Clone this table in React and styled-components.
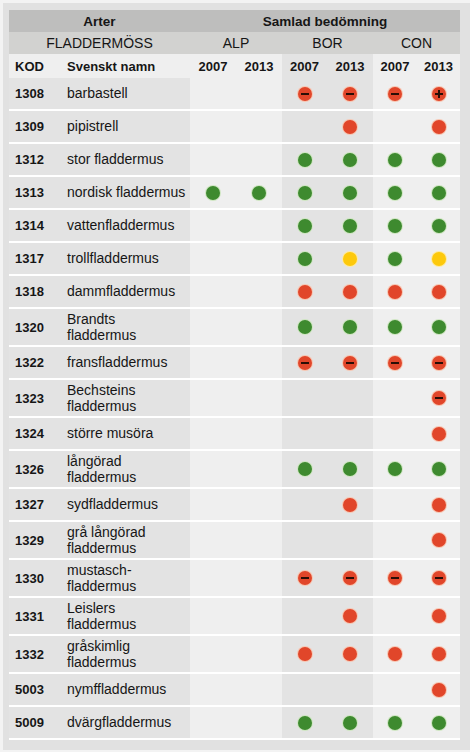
import React from "react";
import styled, { createGlobalStyle, css } from "styled-components";

const Global = createGlobalStyle`
  *, *::before, *::after { box-sizing: border-box; }
  html, body { margin: 0; padding: 0; background: #f3f3f3; }
  body { font-family: "Liberation Sans", Arial, sans-serif; color: #161616; }
`;

const COLS = "53px 128px 46px 46px 45px 46px 44px 43px";

const Frame = styled.div`
  margin: 3px 0 0 3px;
  padding: 7px 0 10px 6px;
  background: #e1e1e1;
  width: 467px;
`;

const Table = styled.div`
  width: 451px;
  display: flex;
  flex-direction: column;
`;

const Row = styled.div`
  display: grid;
  grid-template-columns: ${COLS};
  height: ${(p) => p.$h}px;
  background: ${(p) => p.$bg || "transparent"};
  ${(p) => p.$sep && css`border-bottom: 2px solid #ffffff;`}
`;

const Title = styled.div`
  grid-column: ${(p) => p.$span};
  display: flex;
  align-items: center;
  justify-content: center;
  font-size: ${(p) => (p.$bold ? "13.5px" : "14px")};
  font-weight: ${(p) => (p.$bold ? 700 : 400)};
`;

const HeadCell = styled.div`
  display: flex;
  align-items: center;
  justify-content: ${(p) => (p.$left ? "flex-start" : "center")};
  padding-left: ${(p) => p.$pl || 0}px;
  font-size: 13px;
  font-weight: 700;
  background: ${(p) => (p.$dark ? "#e3e3e3" : "#efefef")};
`;

const Kod = styled.div`
  display: flex;
  align-items: center;
  padding-left: 6px;
  font-size: 13px;
  font-weight: 700;
  background: #e3e3e3;
`;

const Name = styled.div`
  display: flex;
  flex-direction: column;
  justify-content: center;
  padding-left: 5px;
  font-size: 14px;
  line-height: 16.5px;
  background: #e3e3e3;
`;

const Cell = styled.div`
  display: flex;
  align-items: center;
  justify-content: center;
  background: ${(p) => (p.$dark ? "#e3e3e3" : "#efefef")};
`;

const tones = {
  g: { fill: "#3e8a2f", ring: "#cfe6c2" },
  r: { fill: "#e1462a", ring: "#f7c6b2" },
  y: { fill: "#fdc90c", ring: "#feeaa2" },
};

const Dot = styled.span`
  position: relative;
  width: 14px;
  height: 14px;
  border-radius: 50%;
  background: ${(p) => tones[p.$tone].fill};
  box-shadow: 0 0 0 1px ${(p) => tones[p.$tone].ring};
  ${(p) =>
    (p.$mark === "m" || p.$mark === "p") &&
    css`
      &::before {
        content: "";
        position: absolute;
        left: 3px;
        top: 6px;
        width: 8px;
        height: 2px;
        background: #2a0e06;
      }
    `}
  ${(p) =>
    p.$mark === "p" &&
    css`
      &::after {
        content: "";
        position: absolute;
        left: 6px;
        top: 3px;
        width: 2px;
        height: 8px;
        background: #2a0e06;
      }
    `}
`;

const rows = [
  { kod: "1308", name: ["barbastell"], v: [0, 0, "m", "m", "m", "p"] },
  { kod: "1309", name: ["pipistrell"], v: [0, 0, 0, "r", 0, "r"] },
  { kod: "1312", name: ["stor fladdermus"], v: [0, 0, "g", "g", "g", "g"] },
  { kod: "1313", name: ["nordisk fladdermus"], v: ["g", "g", "g", "g", "g", "g"] },
  { kod: "1314", name: ["vattenfladdermus"], v: [0, 0, "g", "g", "g", "g"] },
  { kod: "1317", name: ["trollfladdermus"], v: [0, 0, "g", "y", "g", "y"] },
  { kod: "1318", name: ["dammfladdermus"], v: [0, 0, "r", "r", "r", "r"] },
  { kod: "1320", name: ["Brandts", "fladdermus"], v: [0, 0, "g", "g", "g", "g"] },
  { kod: "1322", name: ["fransfladdermus"], v: [0, 0, "m", "m", "m", "m"] },
  { kod: "1323", name: ["Bechsteins", "fladdermus"], v: [0, 0, 0, 0, 0, "m"] },
  { kod: "1324", name: ["större musöra"], v: [0, 0, 0, 0, 0, "r"] },
  { kod: "1326", name: ["långörad", "fladdermus"], v: [0, 0, "g", "g", "g", "g"] },
  { kod: "1327", name: ["sydfladdermus"], v: [0, 0, 0, "r", 0, "r"] },
  { kod: "1329", name: ["grå långörad", "fladdermus"], v: [0, 0, 0, 0, 0, "r"] },
  { kod: "1330", name: ["mustasch-", "fladdermus"], v: [0, 0, "m", "m", "m", "m"] },
  { kod: "1331", name: ["Leislers", "fladdermus"], v: [0, 0, 0, "r", 0, "r"] },
  { kod: "1332", name: ["gråskimlig", "fladdermus"], v: [0, 0, "r", "r", "r", "r"] },
  { kod: "5003", name: ["nymffladdermus"], v: [0, 0, 0, 0, 0, "r"] },
  { kod: "5009", name: ["dvärgfladdermus"], v: [0, 0, "g", "g", "g", "g"] },
];

const years = ["2007", "2013", "2007", "2013", "2007", "2013"];

function Mark({ code }) {
  if (!code) return null;
  if (code === "m" || code === "p") return <Dot $tone="r" $mark={code} />;
  return <Dot $tone={code} />;
}

export default function App() {
  return (
    <>
      <Global />
      <Frame>
        <Table>
          <Row $h={22} $bg="#bebebd">
            <Title $span="1 / 3" $bold>Arter</Title>
            <Title $span="3 / 9" $bold>Samlad bedömning</Title>
          </Row>
          <Row $h={22} $bg="#d2d2d0">
            <Title $span="1 / 3">FLADDERMÖSS</Title>
            <Title $span="3 / 5">ALP</Title>
            <Title $span="5 / 7">BOR</Title>
            <Title $span="7 / 9">CON</Title>
          </Row>
          <Row $h={24}>
            <HeadCell $left $pl={6}>KOD</HeadCell>
            <HeadCell $left $pl={5}>Svenskt namn</HeadCell>
            {years.map((y, i) => (
              <HeadCell key={i} $dark={i === 2 || i === 3}>{y}</HeadCell>
            ))}
          </Row>
          {rows.map((r) => (
            <Row key={r.kod} $h={r.name.length > 1 ? 38 : 33} $sep>
              <Kod>{r.kod}</Kod>
              <Name>
                {r.name.map((n) => (
                  <span key={n}>{n}</span>
                ))}
              </Name>
              {r.v.map((c, i) => (
                <Cell key={i} $dark={i === 2 || i === 3}>
                  <Mark code={c} />
                </Cell>
              ))}
            </Row>
          ))}
        </Table>
      </Frame>
    </>
  );
}
